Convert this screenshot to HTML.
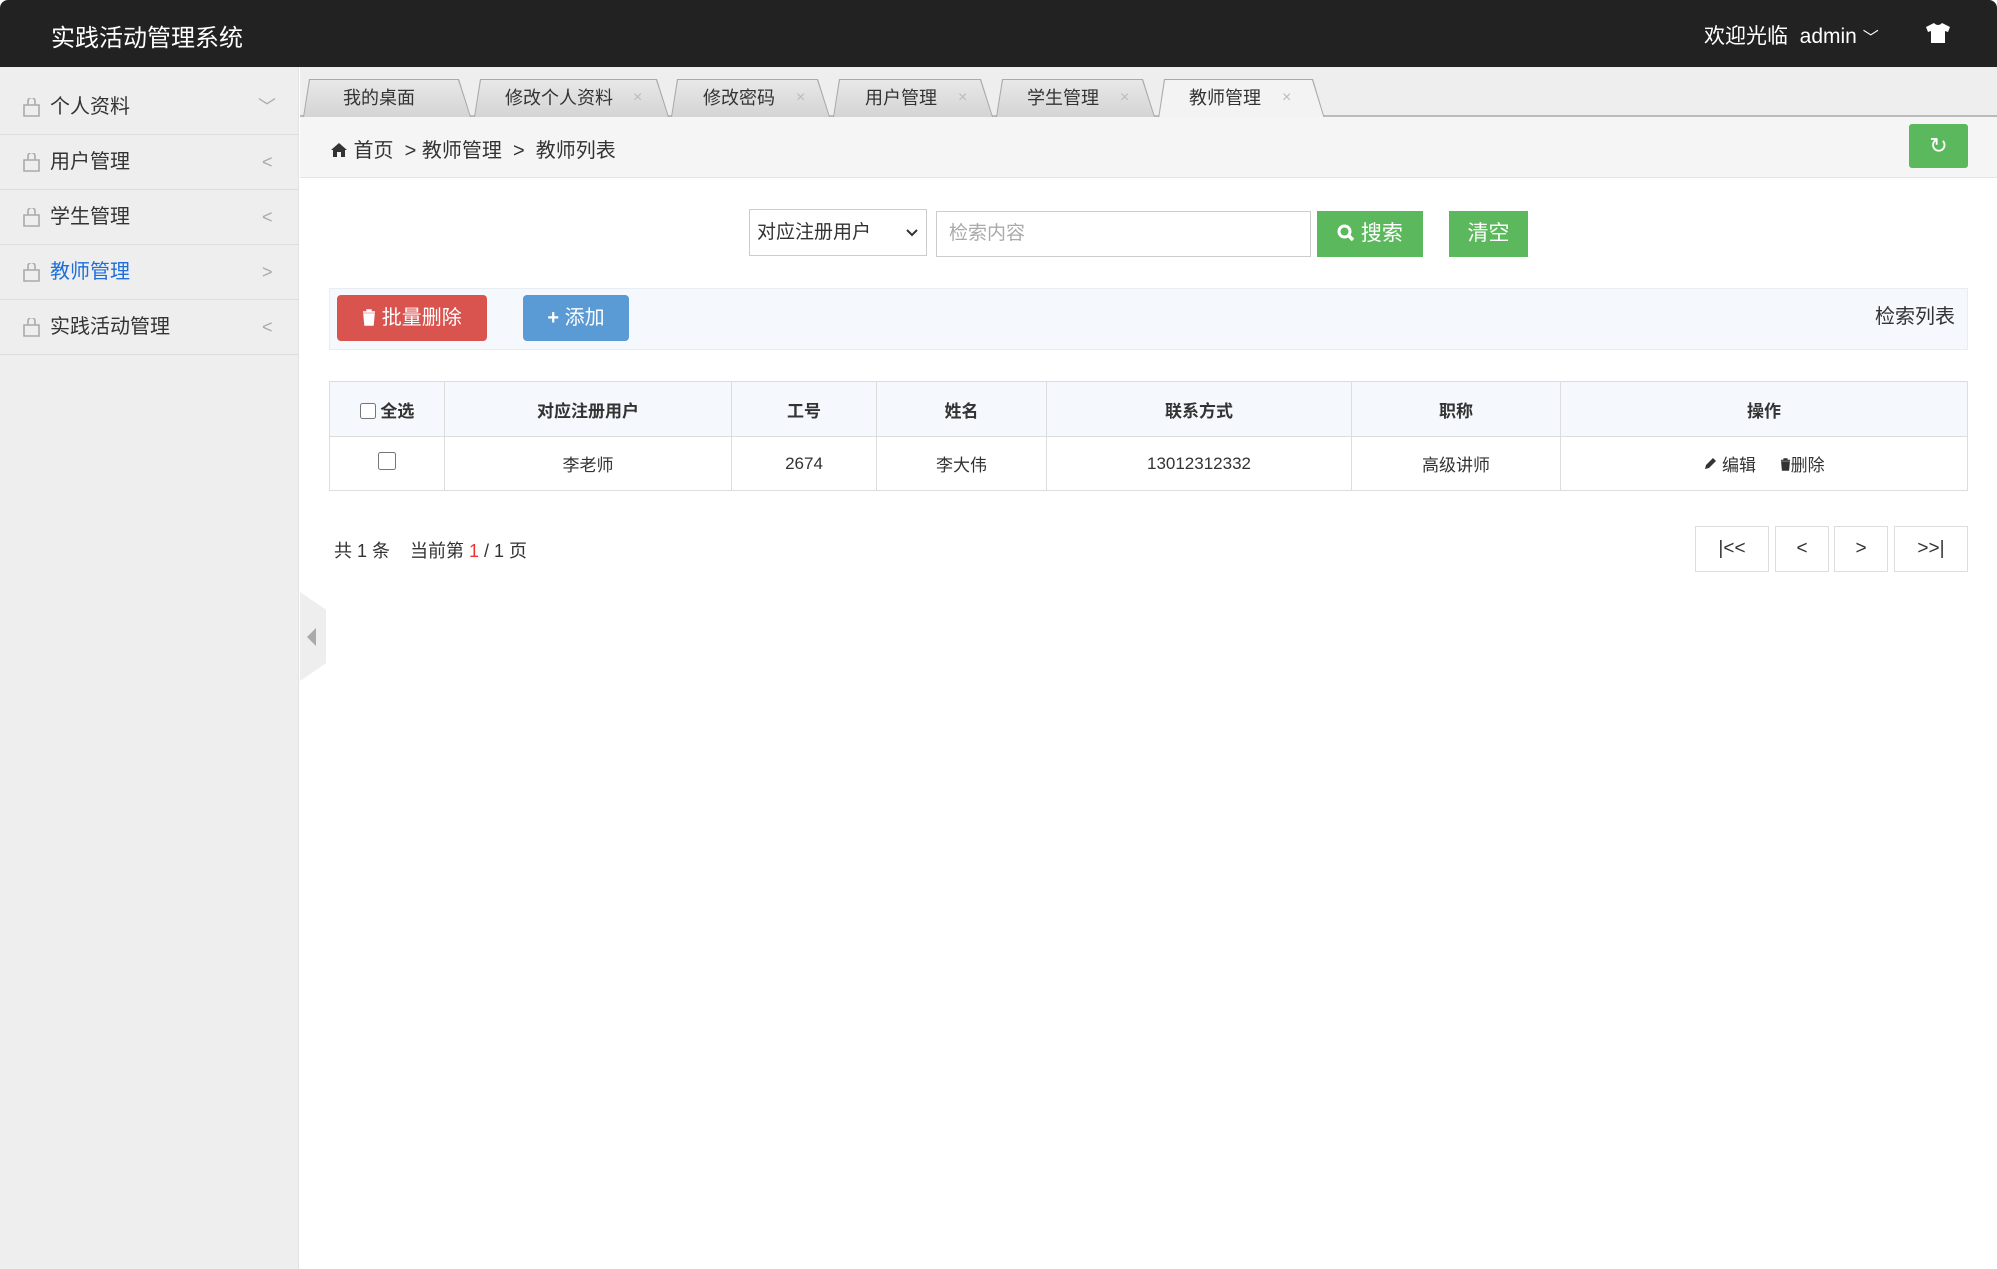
<!DOCTYPE html>
<html><head><meta charset="utf-8"><style>
*{box-sizing:border-box;margin:0;padding:0}
body{width:1997px;height:1269px;overflow:hidden;background:#fff;font-family:"Liberation Sans","Noto Sans CJK SC",sans-serif;color:#333;position:relative}
.abs{position:absolute}
#hd{left:0;top:0;width:1997px;height:67px;background:#222;border-radius:8px 8px 0 0}
#hd .t{left:51px;top:18px;color:#fff;font-size:24px}
#hd .r{left:1704px;top:20px;color:#fff;font-size:21px}
#sb{left:0;top:67px;width:299px;height:1202px;background:#eee;border-right:1px solid #e2e2e2}
.it{position:absolute;left:0;width:299px;height:55px;border-bottom:1px solid #ddd;font-size:20px;line-height:55px;color:#333}
.it .ic{position:absolute;left:23px;top:18px;width:17px;height:19px}
.it .tx{position:absolute;left:50px}
.it .ar{position:absolute;left:262px;color:#aaa;font-size:18px}
#tabs{left:300px;top:67px;width:1697px;height:50px;background:#eee;border-bottom:2px solid #bbb}
.tab{position:absolute;top:79px;height:38px;background:#aaa;clip-path:polygon(6px 0,calc(100% - 12px) 0,100% 100%,0 100%)}
.tab::after{content:"";position:absolute;left:1px;top:1px;right:1px;bottom:0;background:linear-gradient(#e8e8e8,#d4d4d4);clip-path:polygon(6px 0,calc(100% - 12px) 0,100% 100%,0 100%)}
.tab.on{height:40px}
.tab.on::after{background:#f3f3f3}
.tabl{position:absolute;top:79px;height:38px;font-size:18px;line-height:38px;color:#333}
.tabl i{font-style:normal;color:#bbb;font-size:16px;position:absolute}
#bc{left:300px;top:117px;width:1697px;height:61px;background:#f5f5f5;border-bottom:1px solid #e5e5e5}
.btn{position:absolute;color:#fff;font-size:21px;text-align:center}
table{border-collapse:collapse;position:absolute;left:329px;top:381px;width:1639px;font-size:17px}
td,th{border:1px solid #ddd;text-align:center}
th{height:55px;background:#f5f8fc;font-weight:bold;color:#333}
td{height:54px;color:#333}
.pg{position:absolute;top:526px;height:46px;border:1px solid #ddd;font-size:19px;line-height:44px;text-align:center}
</style></head><body>
<div id="hd" class="abs"><div class="t abs">实践活动管理系统</div>
<div class="r abs">欢迎光临&nbsp; admin <span style="font-size:16px">﹀</span></div>
<svg class="abs" style="left:1926px;top:23px" width="24" height="20" viewBox="0 0 24 20"><path d="M8 0 L0 4 L2 9 L5 8 L5 20 L19 20 L19 8 L22 9 L24 4 L16 0 Q12 4 8 0Z" fill="#fff"/></svg>
</div>
<div id="sb" class="abs">
<div class="it" style="top:13px"><svg class="ic" viewBox="0 0 17 19"><path d="M1 7h15v11H1zM5 7V3a3.5 3.5 0 0 1 7 0v4" fill="none" stroke="#aaa" stroke-width="1.6"/></svg><span class="tx">个人资料</span><span class="ar" style="left:258px">﹀</span></div>
<div class="it" style="top:68px"><svg class="ic" viewBox="0 0 17 19"><path d="M1 7h15v11H1zM5 7V3a3.5 3.5 0 0 1 7 0v4" fill="none" stroke="#aaa" stroke-width="1.6"/></svg><span class="tx">用户管理</span><span class="ar">&lt;</span></div>
<div class="it" style="top:123px"><svg class="ic" viewBox="0 0 17 19"><path d="M1 7h15v11H1zM5 7V3a3.5 3.5 0 0 1 7 0v4" fill="none" stroke="#aaa" stroke-width="1.6"/></svg><span class="tx">学生管理</span><span class="ar">&lt;</span></div>
<div class="it" style="top:178px"><svg class="ic" viewBox="0 0 17 19"><path d="M1 7h15v11H1zM5 7V3a3.5 3.5 0 0 1 7 0v4" fill="none" stroke="#aaa" stroke-width="1.6"/></svg><span class="tx" style="color:#1e6fd9">教师管理</span><span class="ar">&gt;</span></div>
<div class="it" style="top:233px"><svg class="ic" viewBox="0 0 17 19"><path d="M1 7h15v11H1zM5 7V3a3.5 3.5 0 0 1 7 0v4" fill="none" stroke="#aaa" stroke-width="1.6"/></svg><span class="tx">实践活动管理</span><span class="ar">&lt;</span></div>
</div>
<div class="abs" style="left:300px;top:592px;width:26px;height:89px;background:#eee;clip-path:polygon(0 0,100% 20%,100% 80%,0 100%)"></div>
<div class="abs" style="left:307px;top:628px;width:0;height:0;border-top:9px solid transparent;border-bottom:9px solid transparent;border-right:9px solid #aaa"></div>
<div id="tabs" class="abs"></div>
<div class="tab" style="left:303px;width:168px"></div>
<div class="tab" style="left:474px;width:195px"></div>
<div class="tab" style="left:671px;width:159px"></div>
<div class="tab" style="left:833px;width:160px"></div>
<div class="tab" style="left:996px;width:159px"></div>
<div class="tab on" style="left:1158px;width:167px"></div>
<div class="tabl" style="left:343px">我的桌面</div>
<div class="tabl" style="left:505px">修改个人资料<i style="left:128px">×</i></div>
<div class="tabl" style="left:703px">修改密码<i style="left:93px">×</i></div>
<div class="tabl" style="left:865px">用户管理<i style="left:93px">×</i></div>
<div class="tabl" style="left:1027px">学生管理<i style="left:93px">×</i></div>
<div class="tabl" style="left:1189px">教师管理<i style="left:93px">×</i></div>
<div id="bc" class="abs"></div>
<div class="abs" style="left:330px;top:134px;font-size:20px;color:#333"><svg width="18" height="16" viewBox="0 0 18 16" style="vertical-align:-1px"><path d="M9 1 L1 8 L3 8 L3 15 L7 15 L7 10 L11 10 L11 15 L15 15 L15 8 L17 8Z" fill="#333"/></svg> 首页 &nbsp;&gt; 教师管理 &nbsp;&gt; &nbsp;教师列表</div>
<div class="btn" style="left:1909px;top:124px;width:59px;height:44px;background:#5cb85c;border-radius:3px;line-height:44px;font-size:22px">&#x21bb;</div>
<div class="abs" style="left:749px;top:209px;width:178px;height:47px;border:1px solid #ccc;font-size:19px;line-height:45px;padding-left:7px">对应注册用户<svg style="position:absolute;right:8px;top:19px" width="12" height="8" viewBox="0 0 12 8"><path d="M1 1l5 5 5-5" fill="none" stroke="#333" stroke-width="2"/></svg></div>
<div class="abs" style="left:936px;top:211px;width:375px;height:46px;border:1px solid #ccc;font-size:19px;line-height:44px;padding-left:12px;color:#aaa">检索内容</div>
<div class="btn" style="left:1317px;top:211px;width:106px;height:46px;background:#5cb85c;line-height:46px"><svg width="18" height="18" viewBox="0 0 18 18" style="vertical-align:-2px"><circle cx="7.5" cy="7.5" r="5.5" fill="none" stroke="#fff" stroke-width="3"/><path d="M11.5 11.5L16 16" stroke="#fff" stroke-width="3.5"/></svg> 搜索</div>
<div class="btn" style="left:1449px;top:211px;width:79px;height:46px;background:#5cb85c;line-height:46px">清空</div>
<div class="abs" style="left:329px;top:288px;width:1639px;height:62px;background:#f5f8fc;border:1px solid #e8edf3"></div>
<div class="btn" style="left:337px;top:295px;width:150px;height:46px;background:#d9534f;border-radius:4px;line-height:46px;font-size:20px"><svg width="14" height="17" viewBox="0 0 14 17" style="vertical-align:-2px"><path d="M1 3h12M5 3V1h4v2M2 5h10l-1 11H3z" fill="#fff" stroke="#fff" stroke-width="1.5"/></svg> 批量删除</div>
<div class="btn" style="left:523px;top:295px;width:106px;height:46px;background:#5b9bd5;border-radius:4px;line-height:46px;font-size:20px"><b>+</b> 添加</div>
<div class="abs" style="left:1875px;top:300px;font-size:20px;color:#333">检索列表</div>
<table><tr><th style="width:115px"><input type="checkbox" style="width:16px;height:16px;vertical-align:-2px"> 全选</th><th style="width:287px">对应注册用户</th><th style="width:145px">工号</th><th style="width:170px">姓名</th><th style="width:305px">联系方式</th><th style="width:209px">职称</th><th>操作</th></tr>
<tr><td><input type="checkbox" style="width:18px;height:18px"></td><td>李老师</td><td>2674</td><td>李大伟</td><td>13012312332</td><td>高级讲师</td><td><svg width="14" height="14" viewBox="0 0 14 14"><path d="M2 12l1-4 7-7 3 3-7 7z" fill="#333"/></svg> 编辑 &nbsp; &nbsp; <svg width="11" height="13" viewBox="0 0 14 17"><path d="M1 3h12M5 3V1h4v2M2 5h10l-1 11H3z" fill="#333" stroke="#333" stroke-width="1.5"/></svg>删除</td></tr></table>
<div class="abs" style="left:334px;top:537px;font-size:18px">共 1 条 &nbsp; &nbsp;当前第 <span style="color:#e33">1</span> / 1 页</div>
<div class="pg" style="left:1695px;width:74px">|&lt;&lt;</div>
<div class="pg" style="left:1775px;width:54px">&lt;</div>
<div class="pg" style="left:1834px;width:54px">&gt;</div>
<div class="pg" style="left:1894px;width:74px">&gt;&gt;|</div>
</body></html>
